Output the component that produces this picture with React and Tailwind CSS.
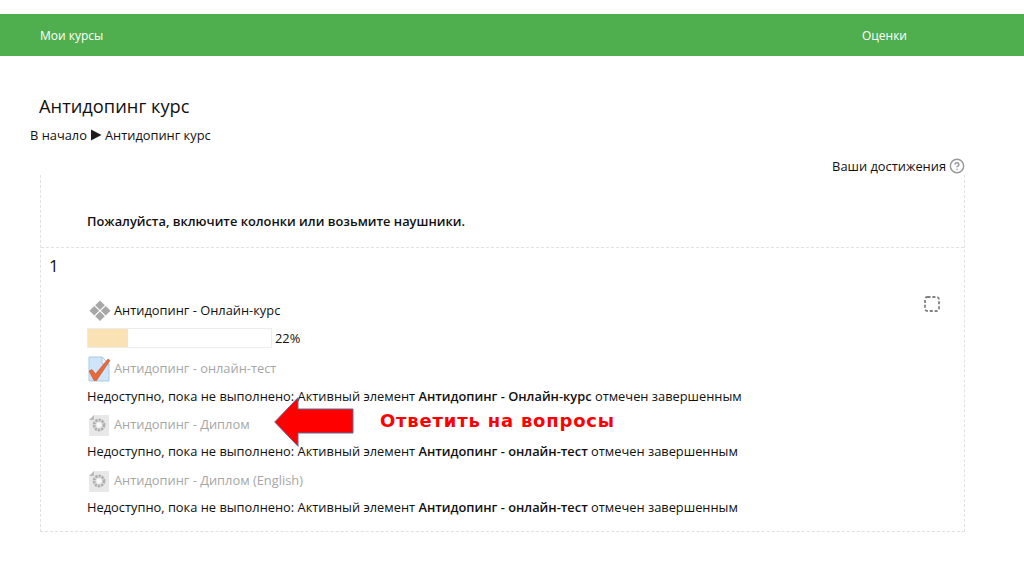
import { HelpCircle } from "lucide-react";

const CourseIcon = () => (
  <svg width="22" height="22" viewBox="0 0 22 22" className="shrink-0">
    <g fill="#a8a8a8">
      <path d="M11 0.5l4.8 4.8-4.8 4.8-4.8-4.8z" />
      <path d="M5.3 6l4.8 4.8-4.8 4.8-4.8-4.8z" />
      <path d="M16.7 6l4.8 4.8-4.8 4.8-4.8-4.8z" />
      <path d="M11 11.5l4.8 4.8-4.8 4.8-4.8-4.8z" />
    </g>
  </svg>
);

const QuizIcon = () => (
  <svg width="24" height="26" viewBox="0 0 24 26" className="shrink-0">
    <path d="M2 1h13l7 7v17H2z" fill="#cfe5f9" stroke="#a9cbe8" />
    <path d="M15 1v7h7z" fill="#eef6fd" stroke="#a9cbe8" />
    <path d="M2 15l3-1.5 3.5 4.5L21 3l2 1.5L9.5 24.5H7z" fill="#e8693a" stroke="#b94a1b" strokeWidth="0.5" />
  </svg>
);

const CertIcon = () => (
  <svg width="22" height="23" viewBox="0 0 22 23" className="shrink-0">
    <path d="M6 1h14a1 1 0 0 1 1 1v19a1 1 0 0 1-1 1H2a1 1 0 0 1-1-1V6z" fill="#e8e8e8" />
    <path d="M1 6l5-5v5z" fill="#bdbdbd" />
    <circle cx="11" cy="11" r="5" fill="none" stroke="#b0b0b0" strokeWidth="2.8" strokeDasharray="2.4 0.8" />
    <circle cx="11" cy="11" r="2.4" fill="#f7f7f7" />
  </svg>
);

const Notice = ({ name, className }) => (
  <p className={`text-[12.85px] leading-[20px] text-[#111] ${className ?? ""}`}>
    Недоступно, пока не выполнено: Активный элемент <span className="font-semibold">{name}</span> отмечен завершенным
  </p>
);

const Activity = ({ icon, label, dim, className }) => (
  <div className={`flex items-center h-[24px] text-[12.85px] ${className ?? ""}`}>
    {icon}
    <span className={dim ? "text-[#a6a6a6]" : "text-[#111]"}>{label}</span>
  </div>
);

export default function App() {
  return (
    <div
      className="relative w-[1024px] h-[576px] overflow-hidden bg-white text-[#111]"
      style={{ fontFamily: '"Open Sans", sans-serif' }}
    >
      {/* Меню */}
      <div className="mt-[14px] h-[42px] pt-[2px] bg-[#4fae4e] flex items-center justify-between pl-[40px] pr-[117px] text-[12px] text-white">
        <span>Мои курсы</span>
        <span>Оценки</span>
      </div>

      {/* Заголовок */}
      <h1 className="mt-[37px] ml-[39px] text-[18.3px] leading-[26px]">Антидопинг курс</h1>
      <div className="mt-[7px] ml-[30px] flex items-center gap-[3px] text-[12.85px] leading-[18px]">
        <span>В начало</span>
        <svg width="12" height="12" viewBox="0 0 12 12"><path d="M1 0.5L11.5 6 1 11.5z" fill="#1c1c1c" /></svg>
        <span>Антидопинг курс</span>
      </div>

      <div className="mt-[13px] pr-[59px] flex items-center justify-end gap-[3px] text-[12.85px] leading-[18px]">
        <span>Ваши достижения</span>
        <HelpCircle size={16} strokeWidth={2.2} className="text-[#999]" />
      </div>

      {/* Секции */}
      <div className="mx-[40px] w-[925px] border-x border-b border-dashed border-[#e0e0e0]">
        <div className="h-[73px] pl-[46px] pt-[36px] border-b border-dashed border-[#e0e0e0]">
          <p className="text-[12.85px] leading-[20px] font-semibold">Пожалуйста, включите колонки или возьмите наушники.</p>
        </div>
        <div className="relative h-[283px] pt-[5px]">
          <div className="pl-[8px] text-[17px] leading-[26px]">1</div>
          <div className="pl-[46px] mt-[20px]">
            <Activity icon={<CourseIcon />} label="Антидопинг - Онлайн-курс" className="pl-[2px] gap-[3px]" />
            <div className="mt-[5px] flex items-center gap-[3px] text-[12.85px] leading-[20px]">
              <div className="w-[185px] h-[20px] border border-[#ececec] bg-white">
                <div className="h-full w-[22%] bg-[#fae2b4]" />
              </div>
              <span>22%</span>
            </div>
            <Activity icon={<QuizIcon />} label="Антидопинг - онлайн-тест" dim className="mt-[9px] gap-[3px]" />
            <Notice name="Антидопинг - Онлайн-курс" className="mt-[5px]" />
            <Activity icon={<CertIcon />} label="Антидопинг - Диплом" dim className="mt-[7px] pl-[1px] gap-[4px]" />
            <Notice name="Антидопинг - онлайн-тест" className="mt-[4px]" />
            <Activity icon={<CertIcon />} label="Антидопинг - Диплом (English)" dim className="mt-[8px] pl-[1px] gap-[4px]" />
            <Notice name="Антидопинг - онлайн-тест" className="mt-[4px]" />
          </div>
          <svg width="16" height="16" viewBox="0 0 16 16" className="absolute right-[24px] top-[48px]">
            <rect x="1" y="1" width="14" height="14" rx="2.5" fill="none" stroke="#808080" strokeWidth="1.8" strokeDasharray="3 1.9" />
          </svg>
        </div>
      </div>

      {/* Пометка поверх страницы */}
      <svg width="81" height="50" viewBox="0 0 81 50" className="absolute left-[274px] top-[397px]">
        <path d="M0.7 25L24 0.7V12H79V36H24V49.3z" fill="#ff0000" stroke="#5b6a9a" strokeWidth="1" />
      </svg>
      <div
        className="absolute left-[380px] top-[409px] text-[18px] leading-[24px] font-bold tracking-[0.8px] text-[#ff0000]"
        style={{ fontFamily: '"DejaVu Sans", sans-serif' }}
      >
        Ответить на вопросы
      </div>
    </div>
  );
}
